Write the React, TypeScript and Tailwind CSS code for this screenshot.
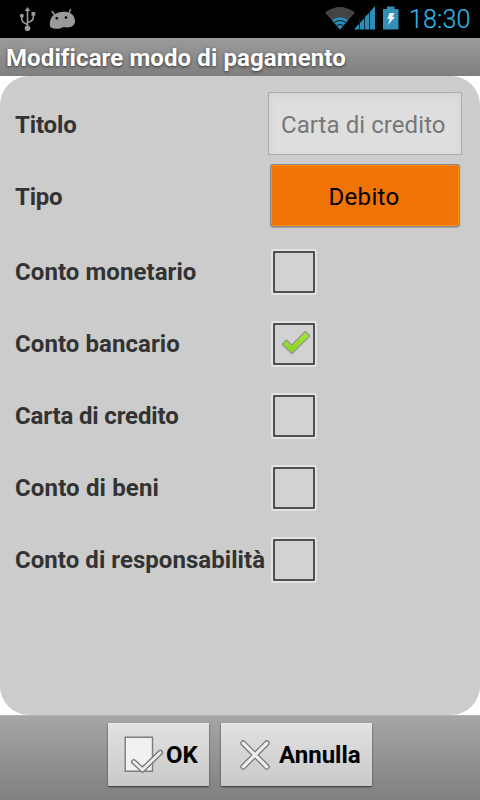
import { useState } from "react";

const accounts = [
  { label: "Conto monetario", spacing: "tracking-[0.07px]", checked: false },
  { label: "Conto bancario", spacing: "tracking-[0.07px]", checked: true },
  { label: "Carta di credito", spacing: "tracking-[-0.15px]", checked: false },
  { label: "Conto di beni", spacing: "tracking-[0.15px]", checked: false },
  { label: "Conto di responsabilità", spacing: "tracking-[0.05px]", checked: false },
];

function UsbIcon() {
  return (
    <svg width="18" height="26" viewBox="0 0 18 26" fill="none" stroke="#9a9a9a" strokeWidth="1.600">
      <path d="M8.500 4v17M8.500 18.500Q2.800 16.500 2.800 13V9M8.500 16.500Q14.300 15 14.300 11.500V8" />
      <path d="M8.500 1L11.300 5H5.700Z" fill="#9a9a9a" stroke="none" />
      <circle cx="8.500" cy="22.300" r="2.800" fill="#9a9a9a" stroke="none" />
      <circle cx="2.800" cy="9.800" r="2" fill="#9a9a9a" stroke="none" />
      <path d="M12.500 6h3.700v3.700h-3.700z" fill="#9a9a9a" stroke="none" />
    </svg>
  );
}

function DroidIcon() {
  return (
    <svg width="28" height="22" viewBox="0 0 28 22">
      <path d="M3.300 2.500L6.500 7M21.500 .8L19.500 5" stroke="#9a9a9a" strokeWidth="1.500" strokeLinecap="round" />
      <path
        d="M4.500 6C9 2.500 17 1.500 22 4.500C25.500 7 27 11.500 25.500 14.500C24 18 19.500 19.200 14.500 18C11 20.300 4.500 20.500 2 18.500C-.5 16.500 1 9 4.500 6Z"
        fill="#9a9a9a"
      />
      <circle cx="7.800" cy="9.300" r="1.300" fill="#000" />
      <circle cx="17" cy="8.500" r="1.300" fill="#000" />
    </svg>
  );
}

function WifiIcon() {
  return (
    <svg width="30" height="24" viewBox="0 0 30 24">
      <path d="M0 6.500Q15-4.500 30 6.500L15 23.500Z" fill="#444" />
      <path d="M7 14.200Q15 8.500 23 14.200L15 23.500Z" fill="#2b8fba" />
      <path d="M9.200 16.400Q15 12.700 20.800 16.400M11.800 19.400Q15 17.500 18.200 19.400" fill="none" stroke="#04141c" strokeWidth="1" />
    </svg>
  );
}

function SignalIcon() {
  return (
    <svg width="22" height="24" viewBox="0 0 22 24">
      <path d="M0 23.500L21 0V23.500Z" fill="#2b8fba" />
      <path d="M5.500 12v12M10.500 8v16M15.500 3v21" stroke="#06202b" strokeWidth="1" />
    </svg>
  );
}

function BatteryIcon() {
  return (
    <svg width="16" height="24" viewBox="0 0 16 24">
      <path d="M4 .5h7.500V3H15.500V23.500H0V3H4Z" fill="#338fb5" />
      <path d="M6.500 7h5L9.500 11H12L5 19L6.800 13H4.500Z" fill="#e6f2f6" />
    </svg>
  );
}

function CheckMark() {
  return (
    <svg width="30" height="26" viewBox="0 0 30 26">
      <defs>
        <linearGradient id="tick" x1="0" y1="0" x2="0" y2="1">
          <stop offset="0" stopColor="#a8e63c" />
          <stop offset="1" stopColor="#80d41c" />
        </linearGradient>
      </defs>
      <path
        d="M1.200 14.200L5.500 10L10.800 15L24.300 1.500L28.800 6L10.800 23.800Z"
        fill="url(#tick)"
        stroke="#959a90"
        strokeWidth="1.300"
        strokeLinejoin="round"
      />
    </svg>
  );
}

function CheckBox({ checked, onToggle, label }: { checked: boolean; onToggle: () => void; label: string }) {
  return (
    <button
      role="checkbox"
      aria-label={label}
      aria-checked={checked}
      onClick={onToggle}
      className="flex h-[42px] w-[42px] shrink-0 items-center justify-center rounded-[1px] border-2 border-[#505050] bg-[#d2d2d2] pb-0.5 pl-[3px] shadow-[0_0_0_2px_#e3e3e3]"
    >
      {checked && <CheckMark />}
    </button>
  );
}

function OkIcon() {
  return (
    <svg width="40" height="38" viewBox="0 0 40 38">
      <path d="M1.200 1.200h27.300v34h-27.300z" fill="#f1f1f1" stroke="#7d7d7d" strokeWidth="1.400" />
      <path d="M9.800 25.800L18.500 33.800L36.300 16.500" fill="none" stroke="#777" strokeWidth="5.500" strokeLinecap="round" />
      <path d="M9.800 25.800L18.500 33.800L36.300 16.500" fill="none" stroke="#eee" strokeWidth="2.800" strokeLinecap="round" />
    </svg>
  );
}

function CancelIcon() {
  return (
    <svg width="30" height="30" viewBox="0 0 30 30" fill="none" strokeLinecap="round">
      <path d="M3.200 3.200L26.800 26.800M26.800 3.200L3.200 26.800" stroke="#777" strokeWidth="5.800" />
      <path d="M3.200 3.200L26.800 26.800M26.800 3.200L3.200 26.800" stroke="#efefef" strokeWidth="3.300" />
    </svg>
  );
}

const actionButton =
  "flex h-[63px] items-center rounded-[1px] bg-linear-to-b from-[#e2e2e2] to-[#c9c9c9] text-2xl font-bold text-black shadow-[0_1px_2px_#333,inset_0_1px_0_#eee]";

export default function App() {
  const [checks, setChecks] = useState(accounts.map((a) => a.checked));
  return (
    <div className="flex h-[800px] w-[480px] flex-col overflow-hidden bg-white font-['Roboto','Liberation_Sans',sans-serif] text-2xl whitespace-nowrap text-[#333]">
      <header className="flex h-[38px] shrink-0 items-start bg-black">
        <div className="mt-[6px] ml-[19px]"><UsbIcon /></div>
        <div className="mt-[9px] ml-[12px]"><DroidIcon /></div>
        <div className="mt-[6px] ml-[248px]"><WifiIcon /></div>
        <div className="mt-[6px] -ml-px"><SignalIcon /></div>
        <div className="mt-[6px] ml-[7px]"><BatteryIcon /></div>
        <span className="mt-[4px] ml-[10px] text-[25px] leading-8 font-light tracking-[0.15px] text-[#33b5e5] [-webkit-text-stroke:0.2px_#33b5e5]">18:30</span>
      </header>
      <h1 className="flex h-[38px] shrink-0 items-center bg-linear-to-b from-[#9b9b9b] to-[#7f7f7f] pt-px pl-1.5 text-2xl leading-8 font-bold tracking-[0.11px] text-white [text-shadow:0_1px_3px_#333]">
        Modificare modo di pagamento
      </h1>
      <main className="flex h-[639px] shrink-0 flex-col rounded-[29px] bg-[#ccc] pt-4 pl-[15px]">
        <div className="flex h-[63px] items-center">
          <span className="w-[253px] pt-0.5 font-bold tracking-[-0.15px]">Titolo</span>
          <div className="flex h-[63px] w-[194px] items-center border border-[#acacac] bg-[#dedede] pt-0.5 pl-3 tracking-[0.07px] text-[#777] shadow-[inset_0_3px_8px_#d2d2d2]">
            Carta di credito
          </div>
        </div>
        <div className="mt-[9px] flex h-[64px] items-center">
          <span className="w-[256px] pt-px font-bold tracking-[-0.2px]">Tipo</span>
          <button className="mb-[2px] h-[61px] w-[188px] rounded-[2px] border border-[#ff8c13] bg-[#f07305] pt-[3px] pr-[2px] tracking-[0.3px] text-black shadow-[0_0_0_1px_#888,0_1px_2px_#444]">
            Debito
          </button>
        </div>
        <div className="mt-2 flex flex-col">
          {accounts.map((a, i) => (
            <div key={a.label} className="flex h-[72px] items-center">
              <span className={`w-[258px] font-bold ${a.spacing}`}>{a.label}</span>
              <CheckBox
                label={a.label}
                checked={checks[i]}
                onToggle={() => setChecks(checks.map((c, j) => (i === j ? !c : c)))}
              />
            </div>
          ))}
        </div>
      </main>
      <footer className="flex h-[85px] shrink-0 gap-3 border-t border-[#b5b5b5] bg-linear-to-b from-[#a6a6a6] to-[#808080] pt-[7px] pl-[108px]">
        <button className={`${actionButton} w-[101px] pl-4`}>
          <OkIcon />
          <span className="ml-0.5">OK</span>
        </button>
        <button className={`${actionButton} w-[151px] pl-[19px]`}>
          <CancelIcon />
          <span className="ml-[9px]">Annulla</span>
        </button>
      </footer>
    </div>
  );
}
